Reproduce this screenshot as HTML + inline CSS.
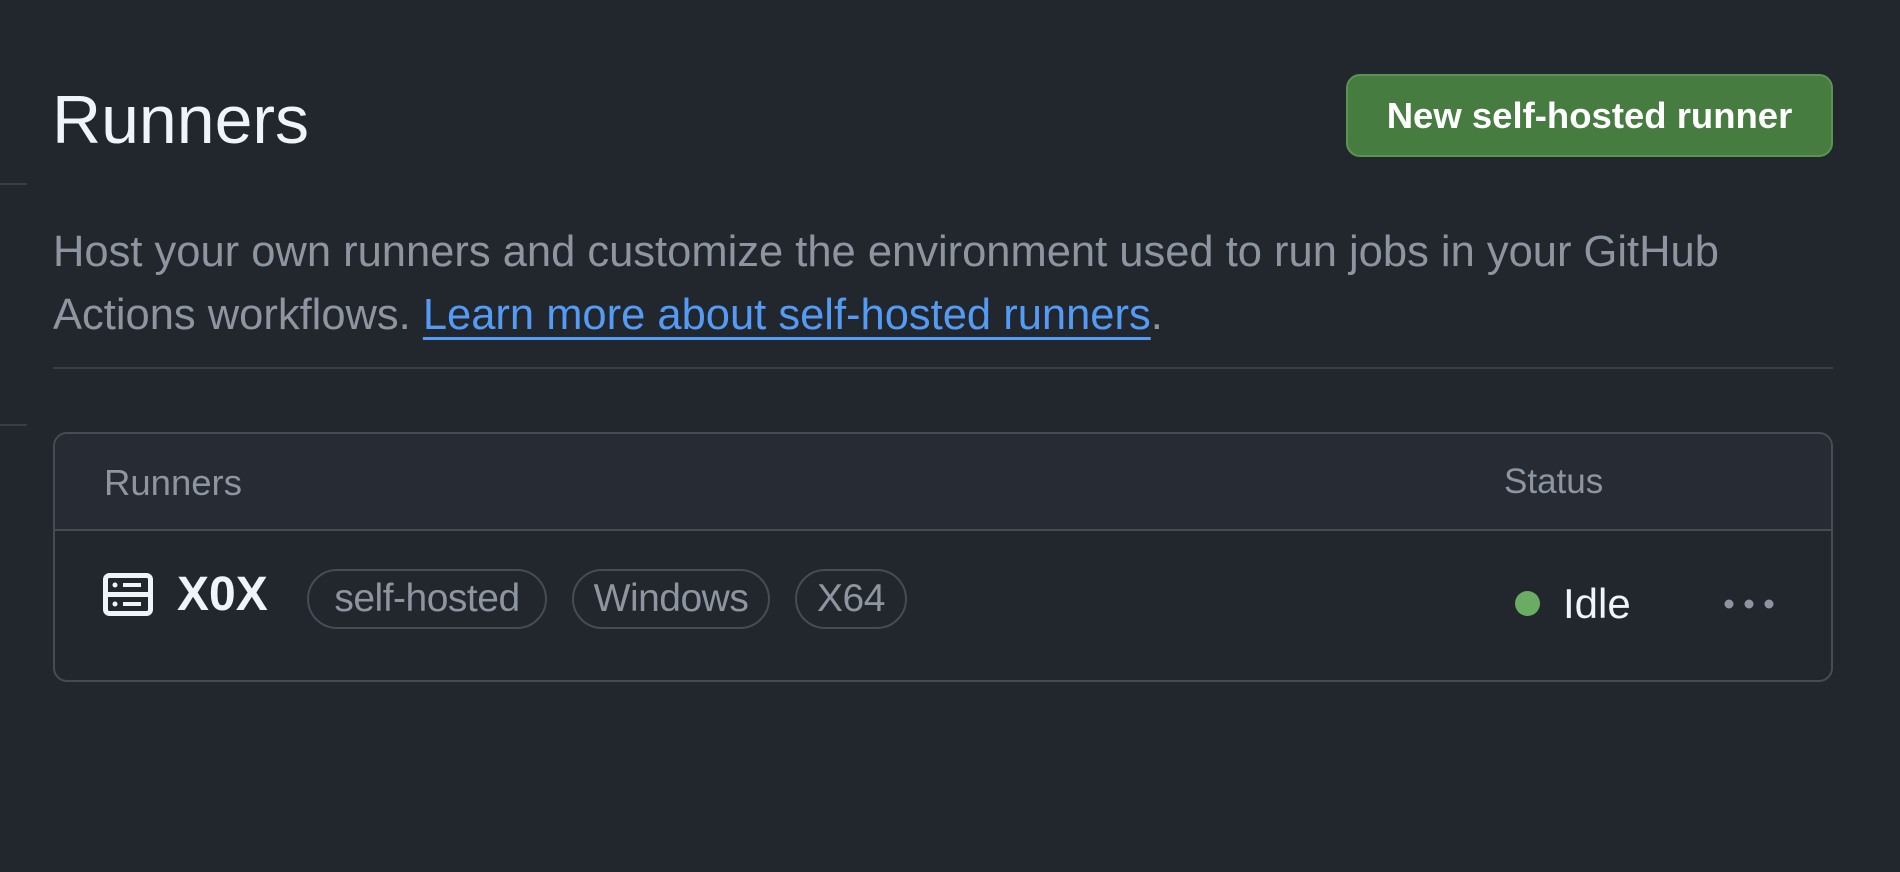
<!DOCTYPE html>
<html><head><meta charset="utf-8"><style>
*{margin:0;padding:0;box-sizing:border-box}
body{width:1900px;height:872px;background:#22272e;font-family:"Liberation Sans",sans-serif;position:relative;overflow:hidden}
.a{position:absolute;white-space:nowrap}
</style></head><body>
<div class="a" style="left:0;top:183px;width:27px;height:2px;background:#373e47"></div>
<div class="a" style="left:0;top:424px;width:27px;height:2px;background:#373e47"></div>
<div class="a" style="left:52px;top:80px;font-size:68px;color:#f0f4f8;line-height:80px">Runners</div>
<div class="a" style="left:1346px;top:74px;width:487px;height:83px;background:#467c40;border:2px solid #5b9451;border-radius:14px;color:#fff;font-weight:bold;font-size:36.5px;line-height:79px;text-align:center">New self-hosted runner</div>
<div class="a" style="left:53px;top:221px;font-size:43.5px;color:#8d96a0;line-height:63px">Host your own runners and customize the environment used to run jobs in your GitHub<br>Actions workflows. <span style="color:#539bf5;text-decoration:underline;text-decoration-thickness:3px;text-underline-offset:8px">Learn more about self-hosted runners</span>.</div>
<div class="a" style="left:53px;top:367px;width:1780px;height:2px;background:#373e47"></div>
<div class="a" style="left:53px;top:432px;width:1780px;height:250px;border:2px solid #444c56;border-radius:14px;overflow:hidden">
 <div style="height:97px;background:#272b33;border-bottom:2px solid #444c56;position:relative">
  <div class="a" style="left:49px;top:28px;font-size:36.5px;color:#8d96a0">Runners</div>
  <div class="a" style="left:1449px;top:28px;font-size:35px;color:#8d96a0">Status</div>
 </div>
 <svg class="a" style="left:48px;top:139px" width="50" height="43" viewBox="0 0 50 43"><rect x="2.5" y="2.5" width="45" height="38" rx="4" fill="none" stroke="#f0f4f8" stroke-width="5"/><line x1="3" y1="21.5" x2="47" y2="21.5" stroke="#f0f4f8" stroke-width="5"/><circle cx="12" cy="12" r="2.5" fill="#f0f4f8"/><circle cx="12" cy="31" r="2.5" fill="#f0f4f8"/><line x1="20" y1="12" x2="38" y2="12" stroke="#f0f4f8" stroke-width="4"/><line x1="20" y1="31" x2="38" y2="31" stroke="#f0f4f8" stroke-width="4"/></svg>
 <div class="a" style="left:122px;top:136px;font-size:48px;font-weight:bold;color:#f0f4f8;line-height:50px">X0X</div>
 <div class="a" style="left:252px;top:135px;width:240px;height:60px;border:2px solid #444c56;border-radius:30px;font-size:39px;color:#8d96a0;line-height:56px;text-align:center;letter-spacing:-0.5px">self-hosted</div>
 <div class="a" style="left:517px;top:135px;width:198px;height:60px;border:2px solid #444c56;border-radius:30px;font-size:39px;color:#8d96a0;line-height:56px;text-align:center;letter-spacing:-0.5px">Windows</div>
 <div class="a" style="left:740px;top:135px;width:112px;height:60px;border:2px solid #444c56;border-radius:30px;font-size:39px;color:#8d96a0;line-height:56px;text-align:center;letter-spacing:-0.5px">X64</div>
 <div class="a" style="left:1460px;top:157px;width:25px;height:25px;border-radius:50%;background:#6bac65"></div>
 <div class="a" style="left:1508px;top:145px;font-size:42px;color:#f0f4f8;line-height:50px">Idle</div>
 <svg class="a" style="left:1668px;top:164px" width="52" height="12"><circle cx="6" cy="6" r="4.5" fill="#8d96a0"/><circle cx="26" cy="6" r="4.5" fill="#8d96a0"/><circle cx="46" cy="6" r="4.5" fill="#8d96a0"/></svg>
</div>
</body></html>
